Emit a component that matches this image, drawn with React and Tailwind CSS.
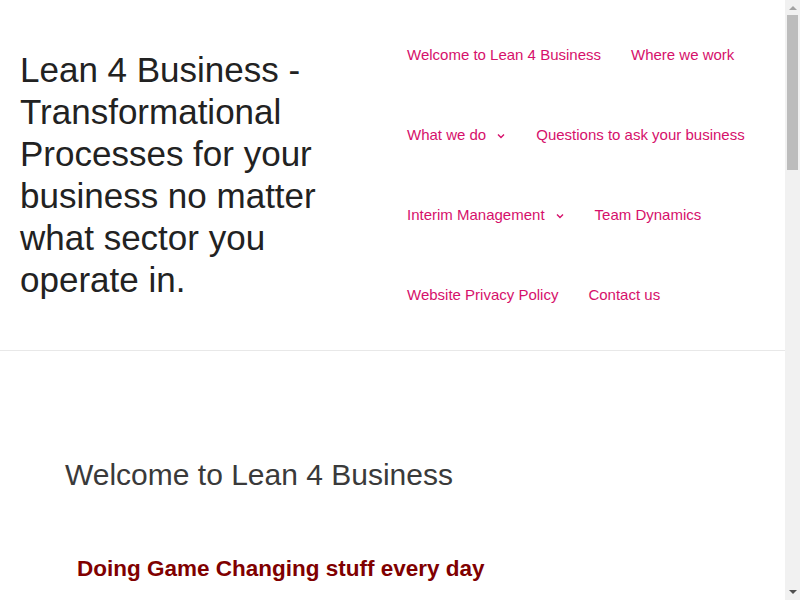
import React from "react";

const font = { fontFamily: '"Liberation Sans", Arial, sans-serif' };

function Chevron() {
  return (
    <svg width="10" height="10" viewBox="0 0 10 10" className="ml-[10px] mt-[2px]" fill="none">
      <path d="M2 3.5 L5 6.5 L8 3.5" stroke="#d6106b" strokeWidth="1.4" />
    </svg>
  );
}

function NavLink({ children, chevron }) {
  return (
    <a href="#" className="flex items-center text-[15px] text-[#d6106b] no-underline">
      {children}
      {chevron && <Chevron />}
    </a>
  );
}

function Scrollbar() {
  return (
    <div className="w-[15px] h-full bg-[#f1f1f1] flex flex-col items-center shrink-0">
      <div className="h-[15px] flex items-center justify-center">
        <svg width="8" height="5" viewBox="0 0 8 5"><path d="M0 5 L4 1 L8 5 Z" fill="#a3a3a3" /></svg>
      </div>
      <div className="w-[11px] h-[155px] bg-[#bcbcbc]" />
      <div className="flex-1" />
      <div className="h-[15px] flex items-center justify-center">
        <svg width="8" height="5" viewBox="0 0 8 5"><path d="M0 0 L8 0 L4 4 Z" fill="#505050" /></svg>
      </div>
    </div>
  );
}

export default function App() {
  const rows = [
    [["Welcome to Lean 4 Business"], ["Where we work"]],
    [["What we do", true], ["Questions to ask your business"]],
    [["Interim Management", true], ["Team Dynamics"]],
    [["Website Privacy Policy"], ["Contact us"]],
  ];
  return (
    <div className="flex h-[600px] w-full overflow-hidden bg-white" style={font}>
      <div className="flex-1 min-w-0">
        <header className="flex items-center border-b border-[#e8e8e8] pt-[15px] pb-[15px]">
          <div className="w-[407px] pl-[20px] pr-[30px]">
            <h1 className="text-[35px] leading-[42px] text-[#222222] font-normal">
              Lean 4 Business - Transformational Processes for your business no matter what sector you operate in.
            </h1>
          </div>
          <nav className="flex flex-col">
            {rows.map((row, i) => (
              <div key={i} className="flex items-center h-[80px] gap-[30px]">
                {row.map(([label, chev]) => (
                  <NavLink key={label} chevron={chev}>{label}</NavLink>
                ))}
              </div>
            ))}
          </nav>
        </header>
        <main className="pl-[65px] pt-[104px]">
          <h2 className="text-[30px] leading-[40px] text-[#3a3a3a] font-normal">Welcome to Lean 4 Business</h2>
          <h3 className="mt-[59px] ml-[12px] text-[22.5px] leading-[30px] font-bold text-[#800000]">
            Doing Game Changing stuff every day
          </h3>
        </main>
      </div>
      <Scrollbar />
    </div>
  );
}
